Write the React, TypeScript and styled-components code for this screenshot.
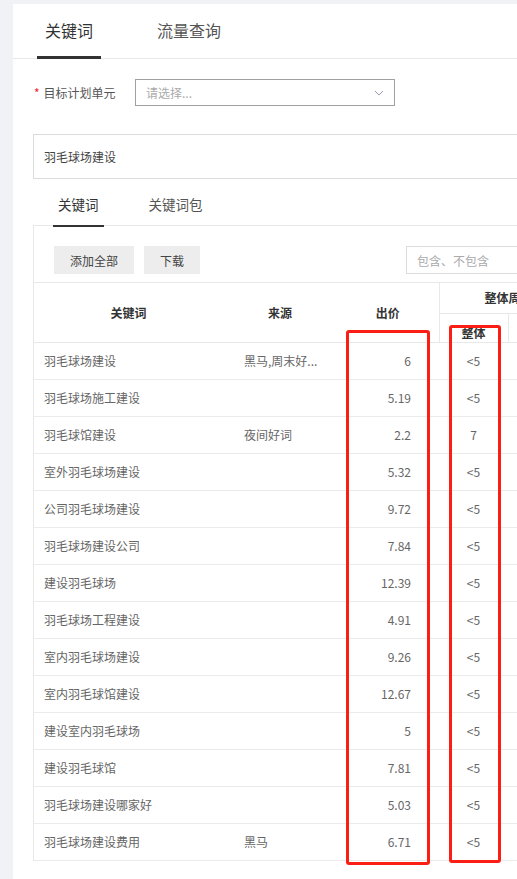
import styled, { createGlobalStyle } from "styled-components";

const GlobalStyle = createGlobalStyle`
    html, body {
        margin: 0;
        padding: 0;
        background: #f0f2f5;
    }

    body {
        font-family: "Noto Sans CJK SC", "Noto Sans", sans-serif;
        color: #333;
    }
`

const Viewport = styled.div`
    position: relative;
    width: 517px;
    height: 879px;
    overflow: hidden;
    background: #f0f2f5;
`

const Panel = styled.div`
    width: 820px;
    height: 875px;
    margin: 4px 0 0 13px;
    background: #fff;
`

const TabBar = styled.div`
    display: flex;
    gap: 48px;
    height: 54px;
    padding-left: 24px;
    border-bottom: 1px solid #e8e8e8;
`

const Tab = styled.div<{ $active?: boolean }>`
    display: flex;
    align-items: center;
    padding: 0 8px;
    font-size: 16px;
    color: ${(p) => (p.$active ? "#333" : "#555")};
    border-bottom: 3px solid ${(p) => (p.$active ? "#333" : "transparent")};
    margin-bottom: -1px;
`

const FormRow = styled.div`
    display: flex;
    align-items: center;
    padding: 20px 0 0 21px;
`

const Label = styled.label`
    width: 101px;
    font-size: 12px;
    color: #555;

    span {
        color: #f5222d;
        margin-right: 4px;
    }
`

const Select = styled.div`
    display: flex;
    align-items: center;
    justify-content: space-between;
    box-sizing: border-box;
    width: 260px;
    height: 27px;
    padding: 0 10px;
    border: 1px solid #a0a0a0;
    font-size: 12px;
    color: #aaa;
`

const KeywordBox = styled.div`
    display: flex;
    align-items: center;
    box-sizing: border-box;
    height: 45px;
    margin: 28px 0 0 20px;
    padding-left: 10px;
    border: 1px solid #dcdcdc;
    font-size: 12px;
    color: #444;
`

const SubTabBar = styled.div`
    display: flex;
    gap: 40px;
    height: 48px;
    padding-left: 40px;
`

const SubTab = styled.div<{ $active?: boolean }>`
    display: flex;
    align-items: center;
    padding: 4px 5px 0;
    font-size: 13.5px;
    color: ${(p) => (p.$active ? "#333" : "#555")};
    border-bottom: 2px solid ${(p) => (p.$active ? "#333" : "transparent")};
    position: relative;
    z-index: 1;
`

const Content = styled.div`
    margin: -2px 0 0 20px;
    border-left: 1px solid #e8e8e8;
    border-top: 1px solid #e8e8e8;
`

const Toolbar = styled.div`
    display: flex;
    align-items: center;
    gap: 10px;
    padding: 20px 20px 8px 20px;
`

const Button = styled.div<{ $width: number }>`
    display: flex;
    align-items: center;
    justify-content: center;
    width: ${(p) => p.$width}px;
    height: 28px;
    background: #ededed;
    font-size: 12px;
    color: #444;
`

const Search = styled.div`
    display: flex;
    align-items: center;
    box-sizing: border-box;
    width: 200px;
    height: 28px;
    margin-left: 196px;
    padding-left: 10px;
    border: 1px solid #dcdcdc;
    font-size: 12px;
    color: #aaa;
`

const Table = styled.table`
    border-collapse: collapse;
    table-layout: fixed;
    width: 780px;
    font-size: 12px;
    line-height: 16px;

    th {
        font-weight: 600;
        color: #333;
        padding: 0;
        border-top: 1px solid #e8e8e8;
        border-bottom: 1px solid #e8e8e8;
    }

    tbody tr {
        height: 37px;
    }

    td {
        padding: 0;
        color: #666;
        border-bottom: 1px solid #ebebeb;
        white-space: nowrap;
    }
`

const HeadRow = styled.tr<{ $h: number }>`
    height: ${(p) => p.$h}px;
`

const GroupTh = styled.th<{ $sub?: boolean; $line?: boolean }>`
    border-left: ${(p) => (p.$line ? "1px solid #e8e8e8" : "none")};
    vertical-align: ${(p) => (p.$sub ? "bottom" : "middle")};
    padding-bottom: ${(p) => (p.$sub ? "1px" : "0")} !important;
    text-align: ${(p) => (p.$sub ? "center" : "left")};
    padding-left: ${(p) => (p.$sub ? "0" : "45px")} !important;
    white-space: nowrap;
`

const Cell = styled.td<{ $align?: string; $pl?: number; $pr?: number }>`
    text-align: ${(p) => p.$align || "left"};
    padding-left: ${(p) => p.$pl || 0}px !important;
    padding-right: ${(p) => p.$pr || 0}px !important;
`

const Mark = styled.div<{ $left: number; $top: number; $width: number; $height: number }>`
    position: absolute;
    left: ${(p) => p.$left}px;
    top: ${(p) => p.$top}px;
    width: ${(p) => p.$width}px;
    height: ${(p) => p.$height}px;
    box-sizing: border-box;
    border: 3px solid #fa1e14;
    border-radius: 3px;
`

const rows = [
    { word: "羽毛球场建设", source: "黑马,周末好...", price: "6", all: "<5" },
    { word: "羽毛球场施工建设", source: "", price: "5.19", all: "<5" },
    { word: "羽毛球馆建设", source: "夜间好词", price: "2.2", all: "7" },
    { word: "室外羽毛球场建设", source: "", price: "5.32", all: "<5" },
    { word: "公司羽毛球场建设", source: "", price: "9.72", all: "<5" },
    { word: "羽毛球场建设公司", source: "", price: "7.84", all: "<5" },
    { word: "建设羽毛球场", source: "", price: "12.39", all: "<5" },
    { word: "羽毛球场工程建设", source: "", price: "4.91", all: "<5" },
    { word: "室内羽毛球场建设", source: "", price: "9.26", all: "<5" },
    { word: "室内羽毛球馆建设", source: "", price: "12.67", all: "<5" },
    { word: "建设室内羽毛球场", source: "", price: "5", all: "<5" },
    { word: "建设羽毛球馆", source: "", price: "7.81", all: "<5" },
    { word: "羽毛球场建设哪家好", source: "", price: "5.03", all: "<5" },
    { word: "羽毛球场建设费用", source: "黑马", price: "6.71", all: "<5" },
]

function App() {
    return (
        <Viewport>
            <GlobalStyle />
            <Panel>
                <TabBar>
                    <Tab $active>关键词</Tab>
                    <Tab>流量查询</Tab>
                </TabBar>

                <FormRow>
                    <Label><span>*</span>目标计划单元</Label>
                    <Select>
                        请选择...
                        <svg width="10" height="6" viewBox="0 0 10 6">
                            <polyline points="1,1 5,5 9,1" fill="none" stroke="#9a9ab0" strokeWidth="1" />
                        </svg>
                    </Select>
                </FormRow>

                <KeywordBox>羽毛球场建设</KeywordBox>

                <SubTabBar>
                    <SubTab $active>关键词</SubTab>
                    <SubTab>关键词包</SubTab>
                </SubTabBar>

                <Content>
                    <Toolbar>
                        <Button $width={80}>添加全部</Button>
                        <Button $width={56}>下载</Button>
                        <Search>包含、不包含</Search>
                    </Toolbar>

                    <Table>
                        <colgroup>
                            <col style={{ width: 189 }} />
                            <col style={{ width: 114 }} />
                            <col style={{ width: 102 }} />
                            <col style={{ width: 69 }} />
                            <col style={{ width: 93 }} />
                            <col />
                        </colgroup>
                        <thead>
                            <HeadRow $h={31}>
                                <th rowSpan={2}>关键词</th>
                                <th rowSpan={2}>来源</th>
                                <th rowSpan={2}>出价</th>
                                <GroupTh colSpan={3} $line>整体周搜索量</GroupTh>
                            </HeadRow>
                            <HeadRow $h={29}>
                                <GroupTh $sub $line>整体</GroupTh>
                                <GroupTh $sub $line>移动</GroupTh>
                                <GroupTh $sub $line>PC</GroupTh>
                            </HeadRow>
                        </thead>
                        <tbody>
                            {rows.map((row) => (
                                <tr key={row.word}>
                                    <Cell $pl={10}>{row.word}</Cell>
                                    <Cell $pl={21}>{row.source}</Cell>
                                    <Cell $align="right" $pr={28}>{row.price}</Cell>
                                    <Cell $align="center">{row.all}</Cell>
                                    <Cell $align="center"></Cell>
                                    <Cell></Cell>
                                </tr>
                            ))}
                        </tbody>
                    </Table>
                </Content>
            </Panel>

            <Mark $left={346} $top={330} $width={84} $height={535} />
            <Mark $left={449} $top={325} $width={52} $height={538} />
        </Viewport>
    )
}

export default App
